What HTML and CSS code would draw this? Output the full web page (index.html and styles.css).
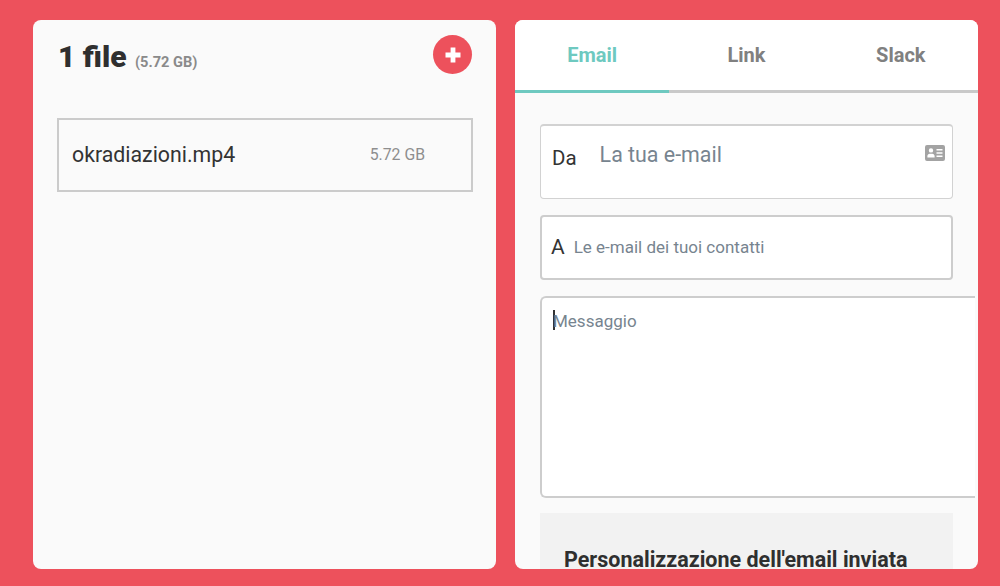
FILE: index.html
```html
<!DOCTYPE html>
<html lang="it">
<head>
  <meta charset="UTF-8" />
  <meta name="viewport" content="width=device-width, initial-scale=1.0"/>
  <title>Invia file</title>
  <link rel="stylesheet" href="styles.css">
</head>
<body>

  <div class="page">

    <!-- file -->
    <div class="panel files-panel">
      <div class="files-header">
        <h2 class="files-title">1 file <small>(5.72 GB)</small></h2>
        <button class="add-button" aria-label="Aggiungi">
          <svg width="18" height="18" viewBox="0 0 18 18">
            <path d="M6.6 1.5h4.8v5.1h5.1v4.8h-5.1v5.1H6.6v-5.1H1.5V6.6h5.1z" fill="#fff"/>
          </svg>
        </button>
      </div>
      <div class="file-row">
        <span class="file-name">okradiazioni.mp4</span>
        <span class="file-size">5.72 GB</span>
      </div>
    </div>

    <!-- invio -->
    <div class="panel send-panel">
      <div class="tabs">
        <div class="tab active">Email</div>
        <div class="tab">Link</div>
        <div class="tab">Slack</div>
      </div>
      <div class="send-body">
        <div class="field field-from">
          <span class="field-label">Da</span>
          <span class="placeholder from-placeholder">La tua e-mail</span>
          <svg class="contact-icon" width="20" height="16" viewBox="0 0 20 16">
            <path fill-rule="evenodd" fill="#a3a3a3" d="M2 0h16a2 2 0 0 1 2 2v12a2 2 0 0 1-2 2H2a2 2 0 0 1-2-2V2a2 2 0 0 1 2-2zM6 3.2a2.2 2.2 0 1 0 0 4.4a2.2 2.2 0 0 0 0-4.4zM2.4 12.4h7.2v-1.3c0-1.3-1-2.4-2.3-2.4H4.7c-1.3 0-2.3 1.1-2.3 2.4zM11.5 4v1.5h6V4zM11.5 7.3v1.5h6V7.3zM11.5 10.6v1.5h6v-1.5z"/>
          </svg>
        </div>
        <div class="field field-to">
          <span class="field-label">A</span>
          <span class="placeholder">Le e-mail dei tuoi contatti</span>
        </div>
        <div class="message-box">
          <span class="caret"></span><span class="placeholder">Messaggio</span>
        </div>
        <div class="custom-section">
          <h3>Personalizzazione dell'email inviata</h3>
        </div>
      </div>
    </div>

  </div>

</body>
</html>
```

FILE: styles.css
```css
body, html {
  height: 100%;
  margin: 0;
  font-family: Roboto, "Liberation Sans", sans-serif;
  overflow: hidden;
}

body {
  background-color: #ed515c;
}

.page {
  display: flex;
  gap: 19px;
  height: 586px;
  padding: 20px 21px 17px 33px;
  box-sizing: border-box;
}

.panel {
  width: 463px;
  background-color: #fafafa;
  border-radius: 8px;
  overflow: hidden;
}

.files-panel {
  padding: 15px 23px 0 24px;
  box-sizing: border-box;
}

.files-header {
  display: flex;
  justify-content: space-between;
  align-items: flex-start;
}

.files-title {
  margin: 4px 0 0 1px;
  font-size: 30px;
  line-height: 36px;
  font-weight: 900;
  color: #2f2f2f;
}

.files-title small {
  margin-left: 1px;
  font-size: 14.6px;
  font-weight: 700;
  color: #8a8a8a;
}

.add-button {
  display: flex;
  align-items: center;
  justify-content: center;
  width: 39px;
  height: 39px;
  margin: 0 1px 0 0;
  padding: 0;
  border: none;
  border-radius: 50%;
  background-color: #ed515c;
}

.file-row {
  display: flex;
  align-items: center;
  width: 416px;
  height: 74px;
  margin-top: 38px;
  padding: 0 46px 1px 13px;
  border: 2px solid #cbcbcb;
  box-sizing: border-box;
}

.file-name {
  flex: 1;
  font-size: 21.3px;
  color: #333;
}

.file-size {
  font-size: 15.8px;
  color: #8e8e8e;
}

.tabs {
  display: flex;
  background-color: #fff;
}

.tab {
  flex: 1;
  height: 73px;
  padding-top: 23px;
  box-sizing: border-box;
  border-bottom: 3px solid #c9c9c9;
  text-align: center;
  font-size: 20px;
  line-height: 24px;
  font-weight: 700;
  color: #808080;
}

.tab.active {
  color: #6ec9c0;
  border-bottom-color: #6ec9c0;
}

.send-body {
  display: flex;
  flex-direction: column;
  gap: 16px;
  padding: 31px 25px 0;
}

.field {
  display: flex;
  width: 413px;
  box-sizing: border-box;
  background-color: #fff;
  border: 2px solid #cdcdcd;
  border-radius: 4px;
}

.field-label {
  color: #333;
  font-size: 20.5px;
}

.placeholder {
  color: #77848f;
  font-size: 17px;
}

.field-from {
  position: relative;
  height: 75px;
  padding: 20px 10px 0 11px;
  border-width: 2px 1px 1px;
  border-color: #d2d2d2;
  gap: 23px;
}

.from-placeholder {
  font-size: 21.4px;
  line-height: 20px;
  margin-top: -1px;
}

.contact-icon {
  position: absolute;
  top: 19px;
  right: 7px;
}

.field-to {
  height: 65px;
  padding: 19px 9px 0;
  gap: 9px;
  line-height: 22px;
}

.field-to .field-label {
  font-size: 21px;
}

.message-box {
  display: flex;
  align-items: flex-start;
  width: 435px;
  height: 202px;
  box-sizing: border-box;
  padding: 12px 11px;
  background-color: #fff;
  border: 2px solid #cdcdcd;
  border-right: none;
  border-radius: 6px 0 0 6px;
  line-height: 22px;
}

.caret {
  width: 2px;
  height: 20px;
  margin-right: -2px;
  background-color: #333;
}

.custom-section {
  width: 413px;
  height: 120px;
  margin-top: -1px;
  box-sizing: border-box;
  padding: 35px 24px 0;
  background-color: #f2f2f2;
}

.custom-section h3 {
  margin: 0;
  font-size: 21.5px;
  line-height: 24px;
  font-weight: 700;
  color: #2f2f2f;
}
```
